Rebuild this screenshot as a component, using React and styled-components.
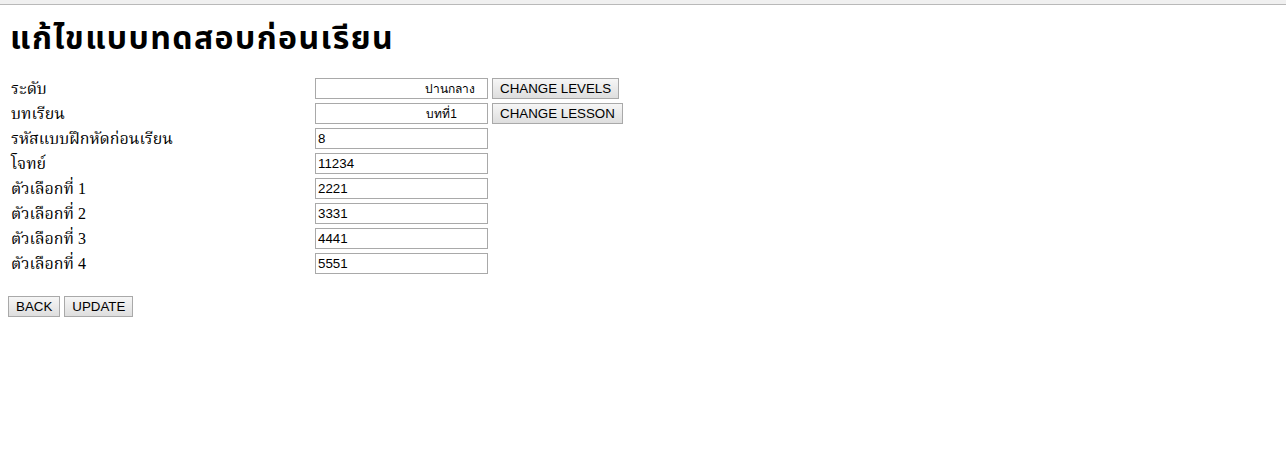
import React from "react";
import styled, { createGlobalStyle } from "styled-components";

const GlobalStyle = createGlobalStyle`
  html, body {
    margin: 0;
    padding: 0;
    background: #fff;
  }
  body {
    font-family: "Liberation Serif", "Noto Serif Thai", "Noto Sans Thai", serif;
    font-size: 16px;
    color: #000;
  }
`;

const TopBar = styled.div`
  height: 4px;
  background: #f0f0f0;
  border-bottom: 1px solid #b9b9b9;
`;

const Page = styled.div`
  padding: 0 8px 8px;
`;

const Title = styled.h1`
  margin: 16px 0 21px 2px;
  font-family: Tahoma, "Noto Sans Thai", "DejaVu Sans", sans-serif;
  font-size: 32px;
  letter-spacing: 1.4px;
  font-weight: bold;
  line-height: 36px;
`;

const Form = styled.div`
  display: grid;
  grid-template-columns: 304px auto;
  row-gap: 4px;
  padding-left: 3px;
`;

const Label = styled.div`
  height: 21px;
  line-height: 21px;
  white-space: nowrap;
`;

const Cell = styled.div`
  display: flex;
  align-items: center;
  gap: 4px;
`;

const Input = styled.input`
  box-sizing: border-box;
  width: 173px;
  height: 21px;
  margin: 0;
  padding: 1px 2px;
  border: 1px solid #a9a9a9;
  font-family: "Liberation Sans", Arial, sans-serif;
  font-size: ${(p) => (p.$inset ? "12px" : "13.33px")};
  text-align: ${(p) => (p.$inset ? "right" : "left")};
  padding-right: ${(p) => p.$inset || 2}px;
  color: #000;
  background: #fff;
`;

const Button = styled.button`
  box-sizing: border-box;
  height: 21px;
  margin: 0;
  padding: 0 7px;
  border: 1px solid #a9a9a9;
  border-radius: 0;
  background: linear-gradient(#f6f6f6, #dedede);
  font-family: "Liberation Sans", Arial, sans-serif;
  font-size: 13.33px;
  color: #000;
`;

const Actions = styled.div`
  display: flex;
  gap: 4px;
  margin-top: 22px;
`;

const rows = [
  { label: "ระดับ", value: "ปานกลาง", inset: 12, button: "CHANGE LEVELS" },
  { label: "บทเรียน", value: "บทที่1", inset: 30, button: "CHANGE LESSON" },
  { label: "รหัสแบบฝึกหัดก่อนเรียน", value: "8" },
  { label: "โจทย์", value: "11234" },
  { label: "ตัวเลือกที่ 1", value: "2221" },
  { label: "ตัวเลือกที่ 2", value: "3331" },
  { label: "ตัวเลือกที่ 3", value: "4441" },
  { label: "ตัวเลือกที่ 4", value: "5551" },
];

const App = () => {
  return (
    <>
      <GlobalStyle />
      <TopBar />
      <Page>
        <Title>แก้ไขแบบทดสอบก่อนเรียน</Title>
        <Form>
          {rows.map((r) => (
            <React.Fragment key={r.label}>
              <Label>{r.label}</Label>
              <Cell>
                <Input
                  defaultValue={r.value}
                  $inset={r.inset}
                  readOnly={!!r.inset}
                />
                {r.button && <Button>{r.button}</Button>}
              </Cell>
            </React.Fragment>
          ))}
        </Form>
        <Actions>
          <Button>BACK</Button>
          <Button>UPDATE</Button>
        </Actions>
      </Page>
    </>
  );
};

export default App;
